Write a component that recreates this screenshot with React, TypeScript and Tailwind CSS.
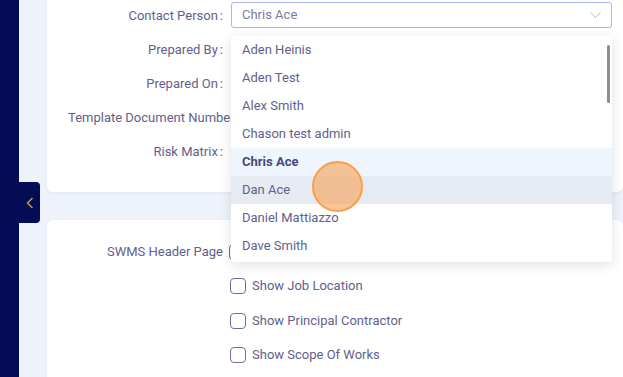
import React from 'react';

const people = [
  'Aden Heinis',
  'Aden Test',
  'Alex Smith',
  'Chason test admin',
  'Chris Ace',
  'Dan Ace',
  'Daniel Mattiazzo',
  'Dave Smith',
];

const labels = ['Contact Person', 'Prepared By', 'Prepared On', 'Template Document Number', 'Risk Matrix'];

const checks = ['Show Job Location', 'Show Principal Contractor', 'Show Scope Of Works'];

function FieldRow({ label }: { label: string }) {
  return (
    <div className="flex items-center h-[26px] gap-[6px]">
      <div className="w-[155px] shrink-0 text-right whitespace-nowrap text-[13px] text-[#5f618c]">
        {label}
        <span className="ml-[2px]">:</span>
      </div>
      <div className="flex-1" />
    </div>
  );
}

export default function App() {
  return (
    <div
      className="relative flex w-[623px] h-[377px] overflow-hidden bg-[#eef2fa]"
      style={{ fontFamily: 'Roboto, "Noto Sans", sans-serif' }}
    >
      {/* sidebar */}
      <div className="w-[19px] shrink-0 bg-[#050c56]" />

      {/* collapse tab */}
      <div className="absolute left-[19px] top-[182px] w-[21px] h-[41px] bg-[#050c56] rounded-r-[4px] flex items-center justify-center">
        <svg width="8" height="12" viewBox="0 0 8 12" fill="none">
          <path d="M6.5 1 L1.5 6 L6.5 11" stroke="#c9a84f" strokeWidth="1.3" />
        </svg>
      </div>

      <div className="flex-1 pl-[28px] flex flex-col">
        {/* card 1 */}
        <div className="bg-white rounded-b-[6px] shadow-[0_1px_3px_rgba(20,30,80,0.06)] pl-[21px] pt-[3px] pb-[27px] flex flex-col gap-[8px]">
          {labels.map((l) => (
            <FieldRow key={l} label={l} />
          ))}
        </div>

        {/* card 2 */}
        <div className="mt-[28px] flex-1 bg-white rounded-t-[6px] shadow-[0_1px_3px_rgba(20,30,80,0.06)] pl-[21px] pt-[19px] flex flex-col">
          <div className="flex items-center h-[26px] gap-[6px]">
            <div className="w-[155px] shrink-0 text-right text-[13px] text-[#5f618c]">SWMS Header Page</div>
            <div className="w-[16px] h-[16px] border-[1.5px] border-[#6d709c] rounded-[4px]" />
          </div>
          <div className="flex flex-col gap-[18.5px] mt-[13px] pl-[162px]">
            {checks.map((c) => (
              <div key={c} className="flex items-center gap-[6px] h-[16px]">
                <div className="w-[16px] h-[16px] border-[1.5px] border-[#6d709c] rounded-[4px]" />
                <span className="text-[13px] text-[#5f618c]">{c}</span>
              </div>
            ))}
          </div>
        </div>
      </div>

      {/* select */}
      <div className="absolute left-[231px] top-[2px] w-[381px] h-[26px] border border-[#a9b5ee] rounded-[3px] bg-white flex items-center pl-[10px] pr-[10px]">
        <span className="flex-1 text-[13px] text-[#7a7ca3]">Chris Ace</span>
        <svg width="11" height="7" viewBox="0 0 11 7" fill="none">
          <path d="M0.5 0.5 L5.5 5.5 L10.5 0.5" stroke="#b8bac8" strokeWidth="1" />
        </svg>
      </div>

      {/* dropdown */}
      <div className="absolute left-[231px] top-[36px] w-[381px] h-[226px] bg-white rounded-[3px] shadow-[0_3px_12px_rgba(30,40,80,0.14)] overflow-hidden">
        {people.map((p) => (
          <div
            key={p}
            className={
              'h-[28px] flex items-center pl-[11px] text-[13px] ' +
              (p === 'Chris Ace'
                ? 'bg-[#eef5fd] font-bold text-[#474a7c]'
                : p === 'Dan Ace'
                ? 'bg-[#e6eaf2] text-[#5f618c]'
                : 'text-[#5f618c]')
            }
          >
            {p}
          </div>
        ))}
        <div className="absolute right-[2px] top-[9px] w-[3px] h-[58px] rounded-full bg-[#8e8e8e]" />
      </div>

      {/* cursor highlight */}
      <div className="absolute left-[312px] top-[161px] w-[51px] h-[51px] rounded-full bg-[rgba(246,160,82,0.6)] border-2 border-[#f7a04e]" />
    </div>
  );
}
